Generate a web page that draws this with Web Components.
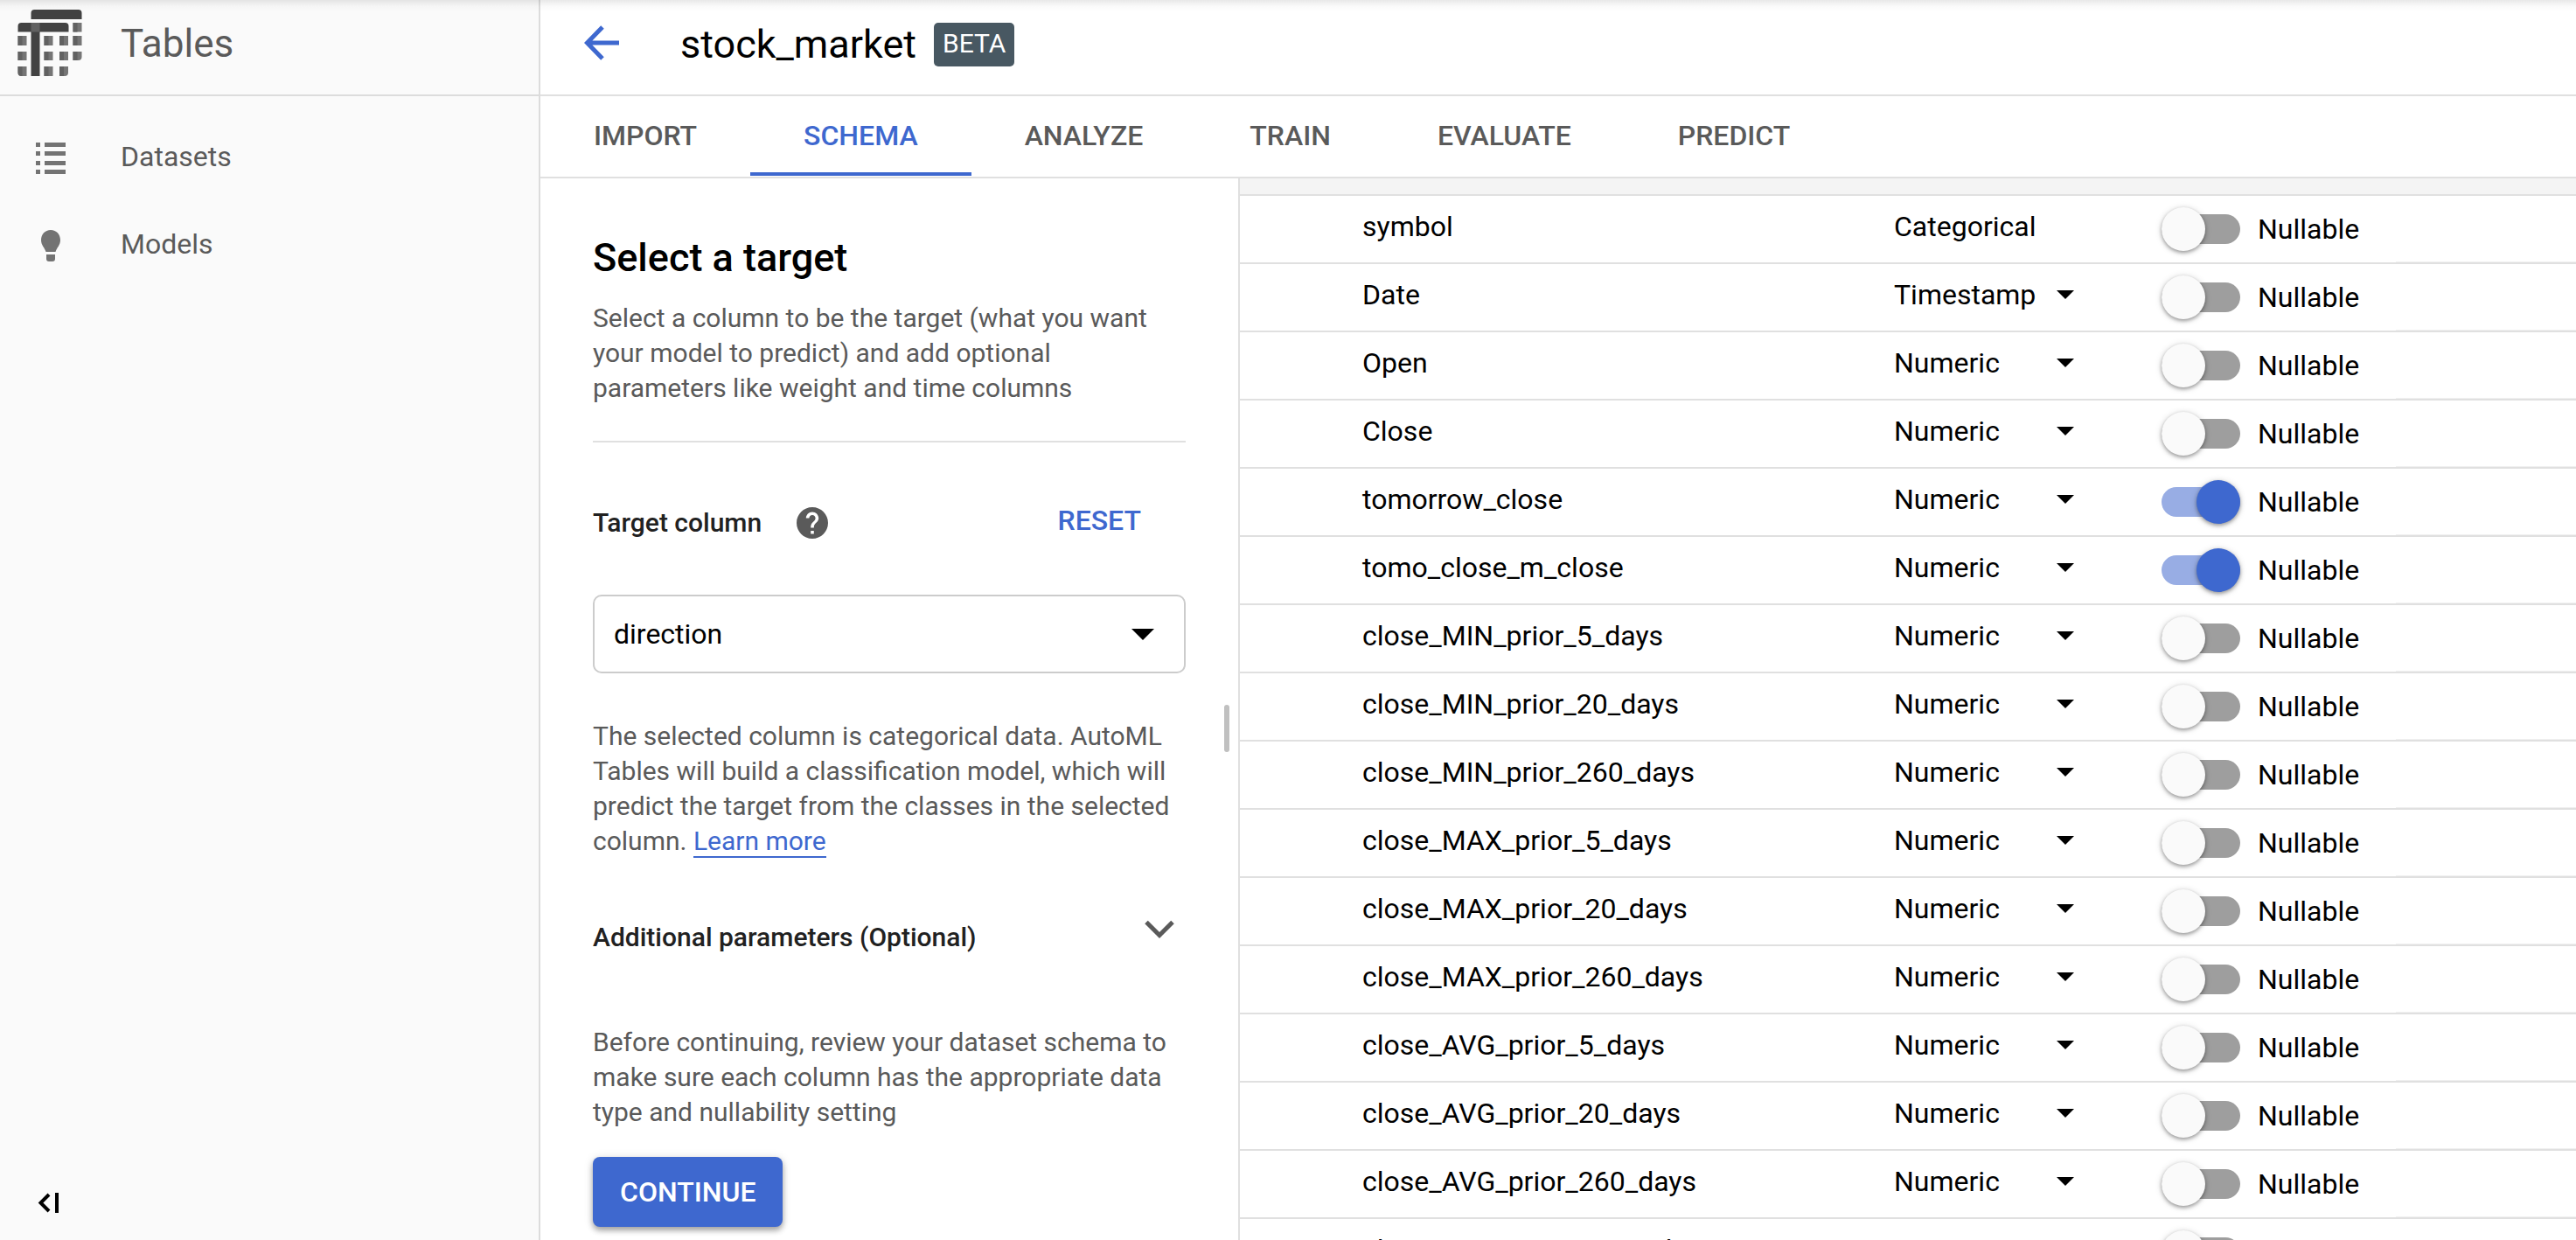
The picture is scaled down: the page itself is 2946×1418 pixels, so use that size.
<!DOCTYPE html>
<html lang="en">
<head>
<meta charset="utf-8">
<title>Tables</title>
<style>
  html, body { height: 100%; }
  body {
    margin: 0;
    overflow: hidden;
    font-family: Roboto, "Liberation Sans", sans-serif;
    font-size: 32px;
    line-height: 40px;
    color: #000;
    background: #fff;
    --accent: #3e68cf;
    --line: #e0e0e0;
    --muted: #5a5a5a;
  }
</style>
</head>
<body>
<tables-app></tables-app>

<template id="tables-app">
  <style>
    :host { display: flex; height: 100vh; position: relative; }
    .edge { position: absolute; inset: 0 0 auto 0; height: 14px; background: linear-gradient(rgba(0,0,0,.09), rgba(0,0,0,.02) 50%, transparent); pointer-events: none; }
    main { flex: 1; min-width: 0; display: flex; flex-direction: column; }
    .content { flex: 1; min-height: 0; display: flex; }
    schema-table { flex: 1; min-width: 0; }
  </style>
  <side-nav></side-nav>
  <main>
    <dataset-header name="stock_market">BETA</dataset-header>
    <tab-bar></tab-bar>
    <div class="content">
      <target-panel></target-panel>
      <schema-table></schema-table>
    </div>
  </main>
  <div class="edge"></div>
</template>

<template id="side-nav">
  <style>
    :host { display: flex; flex-direction: column; box-sizing: border-box; width: 618px; border-right: 2px solid #dcdcdc; background: #fafafa; color: var(--muted); }
    header { display: flex; align-items: center; height: 98px; padding: 0 20px 10px; gap: 44px; border-bottom: 2px solid #dcdcdc; }
    h1 { margin: 2px 0 0; font-size: 44px; line-height: 52px; font-weight: 400; }
    nav { flex: 1; padding-top: 19px; }
    button { display: flex; align-self: flex-start; padding: 0; margin: 0 0 28px 42px; border: 0; background: none; }
    svg { display: block; }
  </style>
  <header>
    <svg width="74" height="78" viewBox="20 9 74 78" aria-hidden="true">
      <path fill="#424242" d="M35.500 21V14q0-4 4-4h50q4 0 4 4v7z"/>
      <path fill="#424242" d="M20.500 35.500V29q0-4 4-4h50q4 0 4 4v6.500z"/>
      <path fill="#424242" d="M35.500 35h10v51h-10z"/>
      <path fill="#616161" d="M35.500 25h10v10.500h-10z"/>
      <g fill="#757575">
        <path d="M20.500 40h10v11h-10zM50.500 40h10v11h-10zM68 40h10v11h-10zM83.500 40h10v11h-10zM83.500 25h10v10.500h-10z"/>
        <path d="M20.500 58h10v10h-10zM50.500 58h10v10h-10zM68 58h10v10h-10zM83.500 58h10v6q0 4-4 4h-6z"/>
        <path d="M20.500 75h10v11h-6q-4 0-4-4zM50.500 75h10v11h-10zM68 75h10v7q0 4-4 4h-6z"/>
      </g>
      <path fill="#616161" d="M20.500 40h5v11h-5zM50.500 40h5v11h-5zM68 40h5v11h-5zM83.500 40h5v11h-5zM83.500 25h5v10.500h-5zM20.500 58h5v10h-5zM50.500 58h5v10h-5zM68 58h5v10h-5zM83.500 58h5v10h-5zM20.500 75h5v11h-1q-4 0-4-4zM50.500 75h5v11h-5zM68 75h5v11h-5z"/>
    </svg>
    <h1>Tables</h1>
  </header>
  <nav>
    <nav-item>
      <svg slot="icon" width="36" height="36" viewBox="0 0 36 36" fill="#737373"><path d="M1 0h5v5H1zM11 0h24v5H11zM1 10h5v5H1zM11 10h24v5H11zM1 21h5v5H1zM11 21h24v5H11zM1 31h5v5H1zM11 31h24v5H11z"/></svg>
      Datasets
    </nav-item>
    <nav-item>
      <svg slot="icon" width="36" height="36" viewBox="0 0 36 36" fill="#737373"><path d="M18 0C11.500 0 7 5 7 11.500c0 6 4 8.500 5.500 13.500h11c1.500-5 5.500-7.500 5.500-13.500C29 5 24.500 0 18 0zM13 28h10v5q0 3-3 3h-4q-3 0-3-3z"/></svg>
      Models
    </nav-item>
  </nav>
  <button aria-label="Collapse"><svg width="28" height="28" viewBox="0 0 28 28" fill="none" stroke="#000" stroke-width="4"><path d="M14 4L4.500 13.500 14 23M23 2v23"/></svg></button>
</template>

<template id="nav-item">
  <style>
    :host { display: block; }
    a { display: flex; align-items: center; gap: 62px; height: 100px; padding-left: 40px; color: inherit; text-decoration: none; }
    ::slotted(svg) { display: block; margin-top: 4px; }
  </style>
  <a href="#"><slot name="icon"></slot><span><slot></slot></span></a>
</template>

<template id="dataset-header">
  <style>
    :host { display: flex; align-items: center; box-sizing: border-box; height: 110px; padding: 0 48px 6px; border-bottom: 2px solid var(--line); }
    a { display: block; padding-bottom: 4px; margin-right: 68px; }
    svg { display: block; }
    h2 { margin: 0 20px 0 0; font-size: 45px; line-height: 52px; font-weight: 400; }
    .badge { box-sizing: border-box; height: 50px; padding: 4px 10px; border-radius: 5px; background: #485862; color: #fff; font-size: 30px; }
  </style>
  <a href="#" aria-label="Back"><svg width="44" height="44" viewBox="0 0 44 44" fill="none" stroke="#3e68cf" stroke-width="5"><path d="M42 22H6M23 4L5.500 22 23 40"/></svg></a>
  <h2></h2>
  <span class="badge"><slot></slot></span>
</template>

<template id="tab-bar">
  <style>
    :host { display: flex; box-sizing: border-box; height: 94px; padding-bottom: 1px; border-bottom: 2px solid var(--line); }
    a { display: flex; align-items: center; padding: 0 61px; border-top: 3px solid transparent; border-bottom: 4px solid transparent; color: var(--muted); font-weight: 500; text-decoration: none; }
    a[aria-current] { color: var(--accent); border-bottom-color: var(--accent); }
  </style>
  <a href="#">IMPORT</a><a href="#" aria-current="page">SCHEMA</a><a href="#">ANALYZE</a><a href="#">TRAIN</a><a href="#">EVALUATE</a><a href="#">PREDICT</a>
</template>

<template id="target-panel">
  <style>
    :host { display: block; position: relative; box-sizing: border-box; width: 800px; padding: 65px 60px 0; border-right: 2px solid var(--line); font-size: 30px; }
    h2 { margin: 0 0 23px; font-size: 45px; line-height: 52px; font-weight: 500; }
    p { margin: 0; color: var(--muted); }
    hr { margin: 40px 0 70px; border: 0; border-top: 2px solid var(--line); }
    .row { display: flex; align-items: center; height: 44px; color: #212121; font-weight: 500; }
    .help { margin-left: 40px; }
    svg { display: block; }
    button { padding: 0; border: 0; background: none; font: inherit; font-size: 32px; font-weight: 500; color: var(--accent); }
    .reset { margin: 0 51px 6px auto; }
    .box { display: grid; align-items: center; margin: 60px 0 52px; }
    .box > * { grid-area: 1 / 1; }
    .box svg { justify-self: end; margin-right: 36px; pointer-events: none; }
    select { appearance: none; box-sizing: border-box; width: 100%; height: 90px; padding: 0 22px; border: 2px solid #ccc; border-radius: 10px; background: #fff; font: inherit; font-size: 32px; color: #000; }
    p a { color: var(--accent); text-decoration: none; border-bottom: 2px solid var(--accent); }
    .more { margin: 68px 0 78px; }
    .more button { margin: 0 12px 18px auto; }
    .primary { display: block; height: 80px; margin-top: 31px; padding: 0 31px; border-radius: 8px; background: var(--accent); color: #fff; box-shadow: 0 4px 6px rgba(0,0,0,.32), 0 1px 12px rgba(0,0,0,.12); }
    .grip { position: absolute; right: 10px; top: 602px; width: 6px; height: 54px; border-radius: 3px; background: #c0c0c0; }
  </style>
  <h2>Select a target</h2>
  <p>Select a column to be the target (what you want your model to predict) and add optional parameters like weight and time columns</p>
  <hr>
  <div class="row">
    <label for="target">Target column</label>
    <button class="help" aria-label="Help"><svg width="36" height="36" viewBox="2 2 20 20" fill="#5a5a5a"><path d="M12 2C6.480 2 2 6.480 2 12s4.480 10 10 10 10-4.480 10-10S17.520 2 12 2zm1 17h-2v-2h2v2zm2.070-7.750l-.9.920C13.450 12.900 13 13.500 13 15h-2v-.5c0-1.100.45-2.100 1.170-2.830l1.240-1.260c.37-.36.590-.86.590-1.410 0-1.100-.9-2-2-2s-2 .9-2 2H8c0-2.210 1.790-4 4-4s4 1.790 4 4c0 .88-.36 1.680-.93 2.250z"/></svg></button>
    <button class="reset">RESET</button>
  </div>
  <div class="box">
    <select id="target"><option>direction</option></select>
    <svg width="26" height="13" viewBox="0 0 26 13"><path d="M0 0h26L13 13z"/></svg>
  </div>
  <p>The selected column is categorical data. AutoML Tables will build a classification model, which will predict the target from the classes in the selected column. <a href="#">Learn more</a></p>
  <div class="row more">
    <span>Additional parameters (Optional)</span>
    <button aria-label="Expand"><svg width="36" height="22" viewBox="0 0 36 22" fill="none" stroke="#5a5a5a" stroke-width="5"><path d="M3 2.500l15 15 15-15"/></svg></button>
  </div>
  <p>Before continuing, review your dataset schema to make sure each column has the appropriate data type and nullability setting</p>
  <button class="primary">CONTINUE</button>
  <div class="grip"></div>
</template>

<template id="nullable-switch">
  <style>
    :host { display: block; }
    label { display: flex; align-items: center; gap: 20px; }
    input { appearance: none; display: flex; align-items: center; width: 90px; height: 34px; margin: 0; border-radius: 17px; background: #9e9e9e; }
    input::before { content: ""; width: 50px; height: 50px; margin: 0; border-radius: 50%; flex: none; background: #fafafa; box-shadow: 0 2px 4px rgba(0,0,0,.35), 0 1px 8px rgba(0,0,0,.14); }
    input:checked { justify-content: flex-end; background: #98ade4; }
    input:checked::before { background: var(--accent); }
  </style>
  <label><input type="checkbox" role="switch"><span><slot></slot></span></label>
</template>

<template id="schema-table">
  <style>
    :host { display: block; overflow: hidden; }
    .band { height: 18px; background: #f4f4f4; border-bottom: 2px solid var(--line); }
    table { width: 100%; table-layout: fixed; border-collapse: separate; border-spacing: 0; }
    td { box-sizing: border-box; height: 78px; padding: 0; border-bottom: 2px solid var(--line); vertical-align: middle; white-space: nowrap; }
    td:last-child { box-shadow: inset 0 -1px #f0f0f0; }
    .name { padding: 0 0 6px 140px; }
    .type { padding: 0 0 6px; }
    .pick { display: grid; align-items: center; width: 206px; }
    .pick > * { grid-area: 1 / 1; }
    .pick svg { justify-self: end; pointer-events: none; }
    select { appearance: none; display: block; width: 100%; height: 40px; padding: 0; margin: 0; border: 0; background: none; font: inherit; color: inherit; }
  </style>
  <div class="band"></div>
  <table>
    <colgroup><col style="width:748px"><col style="width:306px"><col style="width:268px"><col></colgroup>
    <tbody></tbody>
  </table>
</template>

<script>
  class Base extends HTMLElement {
    constructor() {
      super();
      this.attachShadow({ mode: "open" }).append(
        document.getElementById(this.localName).content.cloneNode(true));
    }
  }

  customElements.define("nav-item", class extends Base {});
  customElements.define("side-nav", class extends Base {});
  customElements.define("tab-bar", class extends Base {});
  customElements.define("target-panel", class extends Base {});

  customElements.define("dataset-header", class extends Base {
    connectedCallback() {
      this.shadowRoot.querySelector("h2").textContent = this.getAttribute("name");
    }
  });

  customElements.define("nullable-switch", class extends Base {
    connectedCallback() {
      this.shadowRoot.querySelector("input").checked = this.hasAttribute("checked");
    }
  });

  const COLUMNS = [
    ["symbol", "Categorical"], ["Date", "Timestamp"], ["Open"], ["Close"],
    ["tomorrow_close", "Numeric", true], ["tomo_close_m_close", "Numeric", true],
    ["close_MIN_prior_5_days"], ["close_MIN_prior_20_days"], ["close_MIN_prior_260_days"],
    ["close_MAX_prior_5_days"], ["close_MAX_prior_20_days"], ["close_MAX_prior_260_days"],
    ["close_AVG_prior_5_days"], ["close_AVG_prior_20_days"], ["close_AVG_prior_260_days"],
    ["close_STDDEV_prior_5_days"]
  ];

  customElements.define("schema-table", class extends Base {
    connectedCallback() {
      this.shadowRoot.querySelector("tbody").innerHTML = COLUMNS.map(([name, type = "Numeric", nullable]) => `
        <tr>
          <td class="name">${name}</td>
          <td class="type">${type === "Categorical" ? type : `<div class="pick">
            <select aria-label="Type of ${name}"><option>${type}</option></select>
            <svg width="20" height="10" viewBox="0 0 20 10"><path d="M0 0h20L10 10z"/></svg></div>`}</td>
          <td><nullable-switch${nullable ? " checked" : ""}>Nullable</nullable-switch></td>
          <td></td>
        </tr>`).join("");
    }
  });

  customElements.define("tables-app", class extends Base {});
</script>
</body>
</html>
